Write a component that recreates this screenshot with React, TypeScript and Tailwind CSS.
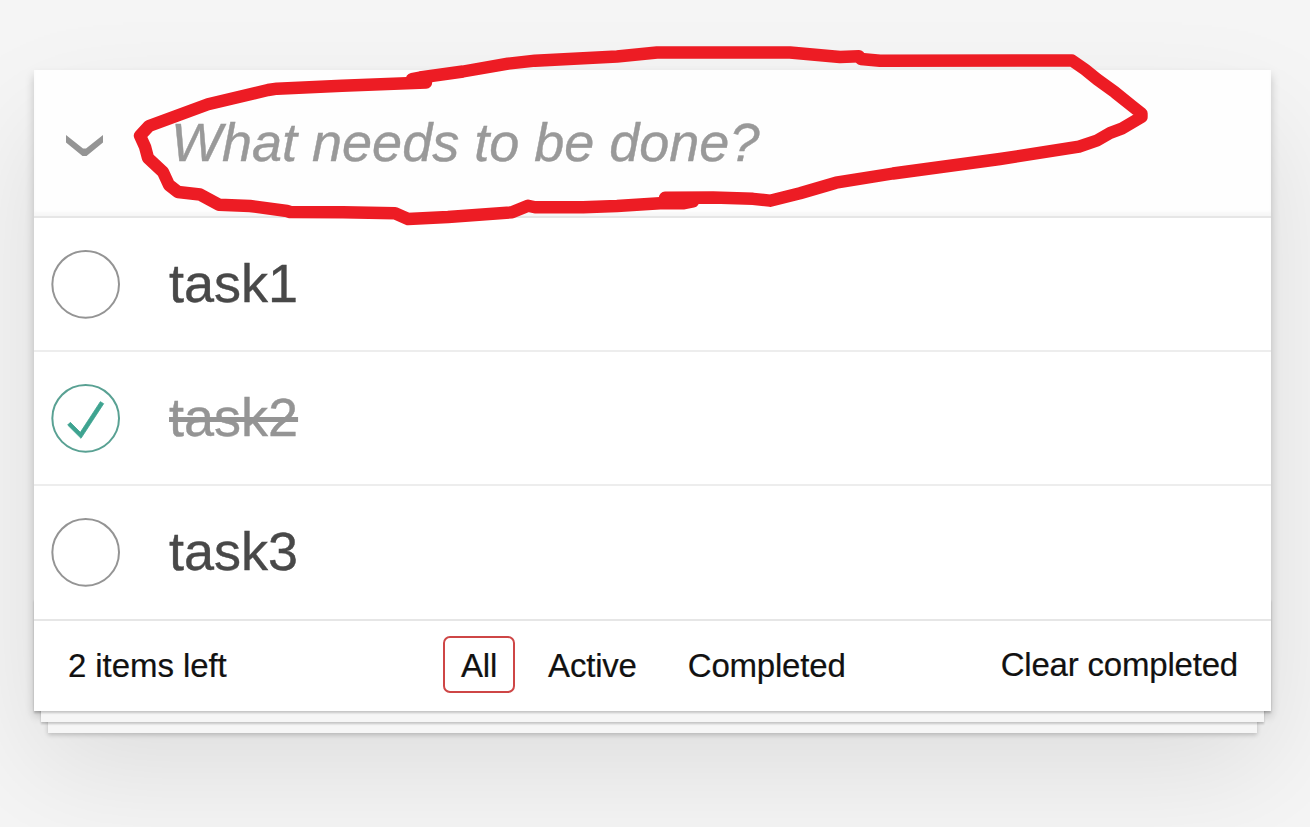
import React, { useState } from 'react';

interface Todo {
  id: number;
  title: string;
  done: boolean;
}

const TODOS: Todo[] = [
  { id: 1, title: 'task1', done: false },
  { id: 2, title: 'task2', done: true },
  { id: 3, title: 'task3', done: false },
];

const FILTERS = ['All', 'Active', 'Completed'];

const CheckCircle: React.FC<{ done: boolean }> = ({ done }) => (
  <svg width="90" height="90" viewBox="-10 -18 100 135" className="shrink-0">
    <circle cx="50" cy="50" r="50" fill="none" stroke={done ? '#59A193' : '#949494'} strokeWidth="3" />
    {done && <path fill="#3EA390" stroke="#3EA390" strokeWidth="1.2" d="M72 25L42 71 27 56l-4 4 20 20 34-52z" />}
  </svg>
);

const TodoRow: React.FC<{ todo: Todo; onToggle: () => void }> = ({ todo, onToggle }) => (
  <li className="flex h-[134px] items-start border-b-2 border-[#ededed] pt-[21px] last:h-[133px] last:border-b-0">
    <button onClick={onToggle} className="mr-[45px] flex">
      <CheckCircle done={todo.done} />
    </button>
    <span
      className={
        todo.done
          ? 'pt-3 text-[54px] leading-[65px] text-[#949494] line-through decoration-[5px] [-webkit-text-stroke:0.4px]'
          : 'pt-3 text-[54px] leading-[65px] text-[#484848] [-webkit-text-stroke:0.4px]'
      }
    >
      {todo.title}
    </span>
  </li>
);

// Hand-drawn marker around the new todo field
const Marker: React.FC = () => (
  <svg
    width="1310"
    height="240"
    viewBox="0 0 1310 240"
    className="pointer-events-none absolute left-0 top-0"
    fill="none"
    stroke="#ed1c24"
    strokeWidth="12.4"
    strokeLinecap="round"
    strokeLinejoin="round"
  >
    <polyline points="426,82.5 342,85.7 277,88.7 268,90 208,104.3 149,126 140,135.7 145,146.7 148,158 163,172 169,185 178,192 200,194.5 219,204.7 250,206 287,211 290,212 343,212.3 395,213.3 408,219 448,217 512,212.3 528,205.7 535,207.3 583,207.3 617,206 660,203.3 683,203.3 693,201.5" />
    <polyline points="665,197.8 713,197.5 753,198.8 770,200.7 800,193.3 836,182.7 893,173.5 1000,159 1079,146.7 1097,140.5 1110,133 1122,128.5 1141.5,117 1141.5,113.5 1132,106 1115,92.3 1097,79.3 1085,69.5 1072,60.5 880,60.7 861,59" />
    <polyline points="859,56.3 840,57 790,52.5 657,52.5 617,56.5 535,60.7 508,63.7 463,71.5 420,77.5 412,79" />
  </svg>
);

const App: React.FC = () => {
  const [todos, setTodos] = useState<Todo[]>(TODOS);
  const [filter, setFilter] = useState('All');

  const toggle = (id: number) => setTodos(todos.map(t => (t.id === id ? { ...t, done: !t.done } : t)));

  const visible = todos.filter(t => filter === 'All' || (filter === 'Completed') === t.done);

  return (
    <div className="relative h-[827px] w-[1310px] overflow-hidden bg-[#f5f5f5] pl-[34px] pt-[70px] font-['Liberation_Sans',Arial,sans-serif] text-[#111111]">
      <section className="relative w-[1237px] bg-white shadow-[0_4.5px_9px_rgba(0,0,0,0.2),0_56px_112px_rgba(0,0,0,0.1)]">
        <div className="absolute bottom-0 left-0 h-[112px] w-full shadow-[0_2px_2px_rgba(0,0,0,0.2),0_18px_0_-7px_#f6f6f6,0_20px_2px_-7px_rgba(0,0,0,0.2),0_36px_0_-14px_#f6f6f6,0_38px_4.5px_-14px_rgba(0,0,0,0.2)]" />
        <header className="relative flex h-[146px] items-center bg-[#fefefe] shadow-[inset_0_-4px_3px_rgba(0,0,0,0.03)]">
          <svg width="38" height="22" viewBox="0 0 38 22" className="ml-8 mt-[6px] shrink-0">
            <path d="M0 0L17 13.5H20L37 0V7.6L20.5 21H16.5L0 7.6Z" fill="#949494" />
          </svg>
          <input
            placeholder="What needs to be done?"
            className="mb-[2px] ml-[67px] w-[1080px] bg-transparent text-[54px] leading-[76px] italic outline-none [-webkit-text-stroke:0.4px] placeholder:text-[#999999]"
          />
        </header>

        <ul className="relative border-t-2 border-[#e6e6e6] bg-white">
          {visible.map(t => (
            <TodoRow key={t.id} todo={t} onToggle={() => toggle(t.id)} />
          ))}
        </ul>

        <footer className="relative flex h-[92px] justify-between border-t-2 border-[#e6e6e6] bg-white pl-[34px] pr-[33px] pt-[15px] text-[33px] leading-[39px] [-webkit-text-stroke:0.2px]">
          <span className="w-[375px] pt-[10px] tracking-[-0.08px]">{todos.filter(t => !t.done).length} items left</span>
          <div className="flex h-[57px] flex-1 gap-[15px] tracking-[-0.2px]">
            {FILTERS.map(f => (
              <button
                key={f}
                onClick={() => setFilter(f)}
                className={
                  f === filter
                    ? 'rounded-[7px] border-2 border-[#ce4646] px-4 pt-px'
                    : 'rounded-[7px] border-2 border-transparent px-4 pt-px'
                }
              >
                {f}
              </button>
            ))}
          </div>
          <button className="h-[57px] tracking-[-0.2px]">Clear completed</button>
        </footer>
      </section>
      <Marker />
    </div>
  );
};

export default App;
